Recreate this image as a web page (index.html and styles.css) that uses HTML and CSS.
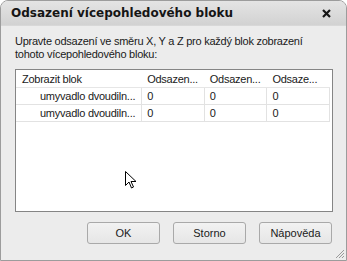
FILE: index.html
```html
<!DOCTYPE html>
<html>
<head>
  <title>Odsazení vícepohledového bloku</title>
  <link rel="stylesheet" href="styles.css">
</head>
<body>
  <div class="window">
    <div class="titlebar">
      <span class="title">Odsazení vícepohledového bloku</span>
      <svg class="close" width="9" height="9" viewBox="0 0 9 9">
        <path d="M1 1 L8 8 M8 1 L1 8" stroke="#151515" stroke-width="2.2" fill="none"/>
      </svg>
    </div>

    <div class="content">
      <p class="info">Upravte odsazení ve směru X, Y a Z pro každý blok zobrazení tohoto vícepohledového bloku:</p>

      <div class="listbox">
        <div class="row header">
          <span class="cell first">Zobrazit blok</span>
          <span class="cell">Odsazen...</span>
          <span class="cell">Odsazen...</span>
          <span class="cell">Odsaze...</span>
        </div>
        <div class="row item">
          <span class="cell first">umyvadlo dvoudiln...</span>
          <span class="cell">0</span>
          <span class="cell">0</span>
          <span class="cell">0</span>
        </div>
        <div class="row item">
          <span class="cell first">umyvadlo dvoudiln...</span>
          <span class="cell">0</span>
          <span class="cell">0</span>
          <span class="cell">0</span>
        </div>
      </div>

      <div class="buttons">
        <button>OK</button>
        <button>Storno</button>
        <button>Nápověda</button>
      </div>
    </div>

    <svg class="grip" width="10" height="10" viewBox="0 0 10 10">
      <path d="M9 1 L1 9 M9 4 L4 9 M9 7 L7 9" stroke="#9a9a9a" stroke-width="1" fill="none"/>
    </svg>

    <svg class="pointer" width="14" height="20" viewBox="0 0 14 20">
      <path d="M1.5 1.5 L1.5 15.5 L5 12 L7.5 18 L9.5 17 L7 11.5 L12 11.5 Z" fill="#fff" stroke="#000" stroke-width="1"/>
    </svg>
  </div>
</body>
</html>
```

FILE: styles.css
```css
* {
  margin: 0;
  padding: 0;
  box-sizing: border-box;
}

body {
  background: #ffffff;
  font-family: "Liberation Sans", Arial, sans-serif;
  font-size: 11px;
  letter-spacing: -0.25px;
  color: #1a1a1a;
}

.window {
  position: relative;
  width: 347px;
  height: 261px;
  background: #ececec;
  border: 1px solid #9c9c9c;
  border-radius: 8px 8px 0 0;
  display: flex;
  flex-direction: column;
}

.titlebar {
  height: 25px;
  display: flex;
  align-items: center;
  justify-content: space-between;
  padding: 0 15px 0 10px;
  background: linear-gradient(#e4e4e4, #d2d2d2);
  border-radius: 7px 7px 0 0;
  border-bottom: 1px solid #d8d8d8;
}

.title {
  font-family: "DejaVu Sans", sans-serif;
  font-weight: bold;
  font-size: 12px;
  letter-spacing: 0;
  color: #151515;
}

.content {
  flex: 1;
  display: flex;
  flex-direction: column;
  padding: 9px 13px 0 14px;
}

.info {
  line-height: 13px;
  width: 310px;
  margin-bottom: 8px;
}

.listbox {
  height: 143px;
  background: #ffffff;
  border: 1px solid #858585;
}

.row {
  display: flex;
  height: 17px;
  align-items: center;
  margin-right: 2px;
}

.header {
  height: 18px;
  border-bottom: 1px solid #e6e6e6;
}

.item {
  border-bottom: 1px solid #e2e2e2;
}

.cell {
  width: 63px;
  height: 100%;
  display: flex;
  align-items: center;
  padding-left: 5px;
  white-space: nowrap;
}

.cell.first {
  width: 127px;
  padding-left: 6px;
}

.item .cell {
  border-right: 1px solid #e2e2e2;
}

.item .cell.first {
  padding-left: 24px;
}

.buttons {
  display: flex;
  justify-content: flex-end;
  gap: 13px;
  margin-top: 10px;
  padding-right: 1px;
}

button {
  width: 73px;
  height: 22px;
  font-family: "Liberation Sans", Arial, sans-serif;
  font-size: 11px;
  color: #1a1a1a;
  background: linear-gradient(#f2f2f2, #e6e6e6);
  border: 1px solid #a9a9a9;
  border-radius: 3px;
}

.grip {
  position: absolute;
  right: 1px;
  bottom: 1px;
}

.pointer {
  position: absolute;
  left: 123px;
  top: 169px;
}
```
